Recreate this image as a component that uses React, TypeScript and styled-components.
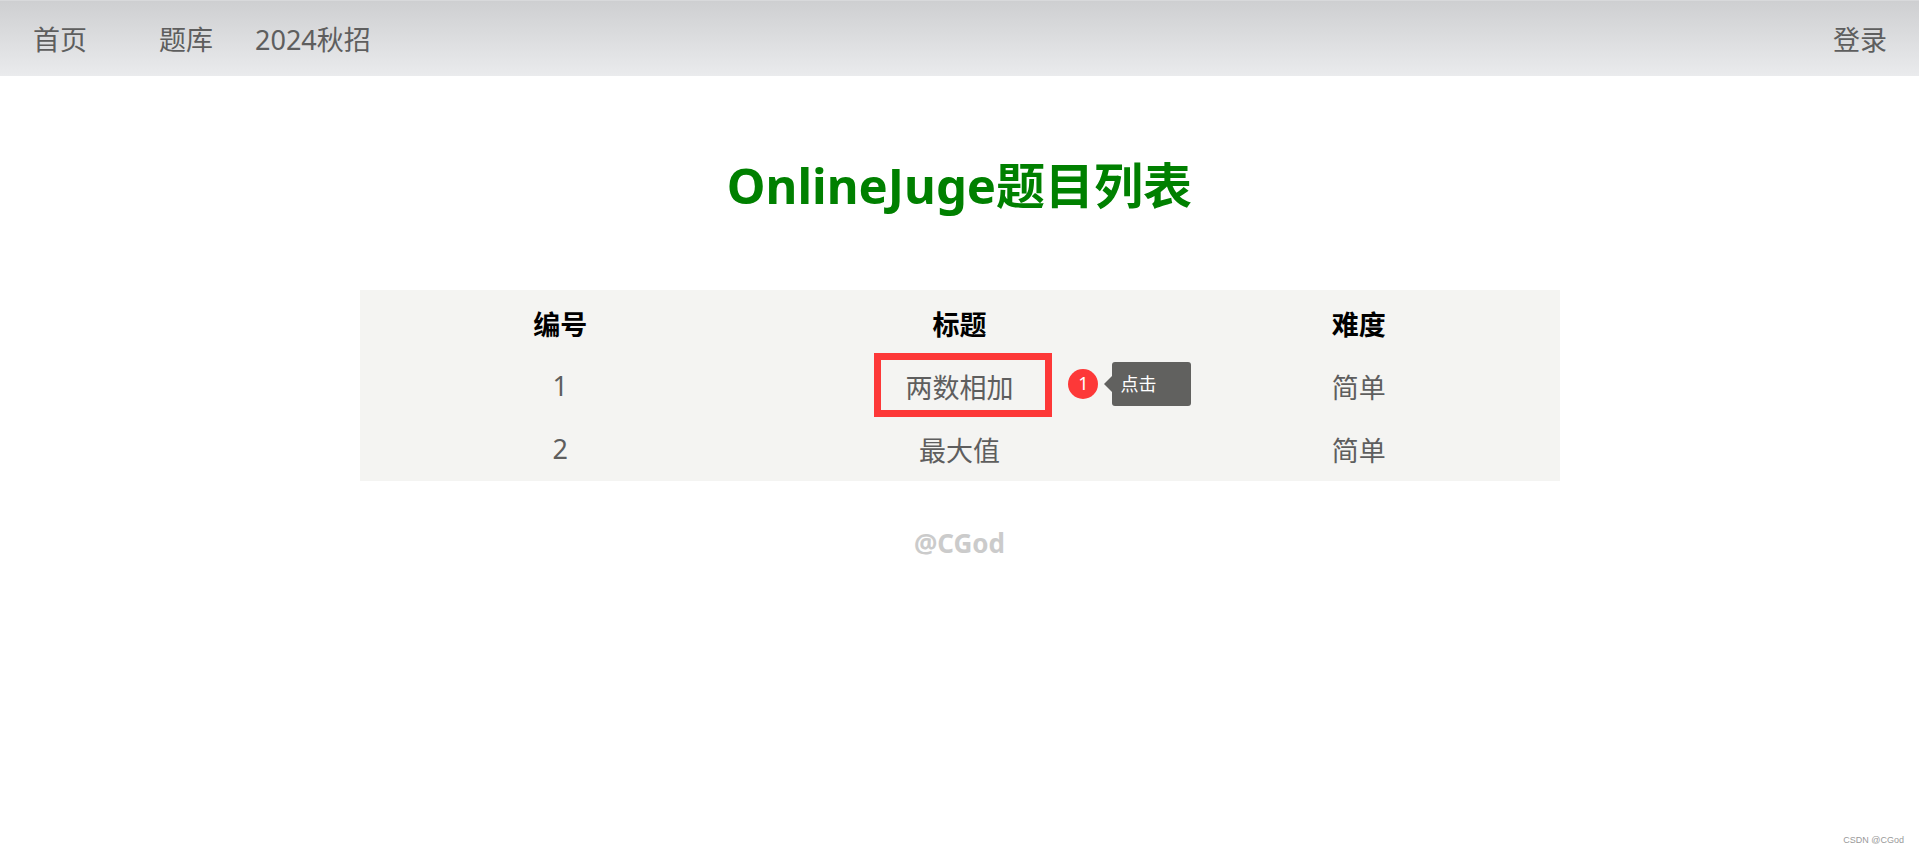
import React from "react";
import styled, { createGlobalStyle } from "styled-components";

const GlobalStyle = createGlobalStyle`
  * { box-sizing: border-box; }
  body {
    margin: 0;
    background: #fff;
    color: #5e5e5e;
    font-family: "Noto Sans", "Noto Sans CJK SC", sans-serif;
    font-size: 27px;
    line-height: 36px;
  }
`;

const Page = styled.div`
  min-height: 100vh;
  display: flex;
  flex-direction: column;
`;

const Navbar = styled.nav`
  display: flex;
  align-items: center;
  gap: 42px;
  height: 76px;
  padding: 2px 32px 0 33px;
  border-top: 1px solid #d8d9db;
  background: linear-gradient(#cecfd1, #eaebed);
`;

const NavLink = styled.a<{ $home?: boolean; $end?: boolean }>`
  color: inherit;
  text-decoration: none;
  margin-right: ${(p) => (p.$home ? "30px" : "0")};
  margin-left: ${(p) => (p.$end ? "auto" : "0")};
`;

const Main = styled.main`
  flex: 1;
  display: flex;
  flex-direction: column;
  align-items: center;
  padding: 76px 24px 0;
`;

const Title = styled.h1`
  margin: 0 0 72px;
  color: #008000;
  font-size: 49px;
  line-height: 66px;
`;

const ProblemTable = styled.table`
  width: 100%;
  max-width: 1200px;
  table-layout: fixed;
  border-collapse: separate;
  border-spacing: 2px;
  background: #f4f4f2;
  text-align: center;
`;

const HeadCell = styled.th`
  height: 61px;
  padding: 4px 0 0;
  color: #000;
`;

const Cell = styled.td<{ $numeric?: boolean }>`
  height: 61px;
  padding: ${(p) => (p.$numeric ? "0" : "4px 0 0")};
`;

const ProblemLink = styled.a`
  position: relative;
  display: inline-block;
  color: inherit;
  text-decoration: none;
`;

const Highlight = styled.span`
  position: absolute;
  top: -17px;
  left: -31px;
  width: 178px;
  height: 64px;
  border: 7px solid #fd3838;
`;

const Callout = styled.span`
  position: absolute;
  top: -8px;
  left: 163px;
  display: flex;
  align-items: center;
  gap: 14px;
  color: #fff;
  font-size: 18px;
  line-height: 24px;
`;

const StepBadge = styled.span`
  width: 30px;
  height: 30px;
  border-radius: 50%;
  background: #fd3838;
  line-height: 28px;
  text-align: center;
`;

const Tooltip = styled.span`
  position: relative;
  width: 79px;
  height: 44px;
  padding: 10px 8px;
  border-radius: 3px;
  background: #61615f;
  text-align: left;

  &::before {
    content: "";
    position: absolute;
    top: 14px;
    left: -8px;
    border: solid transparent;
    border-width: 8px 8px 8px 0;
    border-right-color: #61615f;
  }
`;

const Author = styled.h4`
  margin: 44px 0 0;
  color: #cbcbcb;
  font-size: 26px;
`;

const Watermark = styled.footer`
  padding: 0 15px 4px;
  color: #999;
  font-family: "Liberation Sans", sans-serif;
  font-size: 9px;
  line-height: 18px;
  text-align: right;
`;

const problems = [
  { id: 1, title: "两数相加", level: "简单", hint: "点击" },
  { id: 2, title: "最大值", level: "简单" },
];

export default function App() {
  return (
    <Page>
      <GlobalStyle />
      <Navbar>
        <NavLink href="#home" $home>首页</NavLink>
        <NavLink href="#problems">题库</NavLink>
        <NavLink href="#autumn">2024秋招</NavLink>
        <NavLink href="#login" $end>登录</NavLink>
      </Navbar>
      <Main>
        <Title>OnlineJuge题目列表</Title>
        <ProblemTable>
          <thead>
            <tr>
              <HeadCell scope="col">编号</HeadCell>
              <HeadCell scope="col">标题</HeadCell>
              <HeadCell scope="col">难度</HeadCell>
            </tr>
          </thead>
          <tbody>
            {problems.map((p) => (
              <tr key={p.id}>
                <Cell $numeric>{p.id}</Cell>
                <Cell>
                  <ProblemLink href={`#question-${p.id}`}>
                    {p.title}
                    {p.hint && (
                      <>
                        <Highlight />
                        <Callout>
                          <StepBadge>1</StepBadge>
                          <Tooltip>{p.hint}</Tooltip>
                        </Callout>
                      </>
                    )}
                  </ProblemLink>
                </Cell>
                <Cell>{p.level}</Cell>
              </tr>
            ))}
          </tbody>
        </ProblemTable>
        <Author>@CGod</Author>
      </Main>
      <Watermark>CSDN @CGod</Watermark>
    </Page>
  );
}
